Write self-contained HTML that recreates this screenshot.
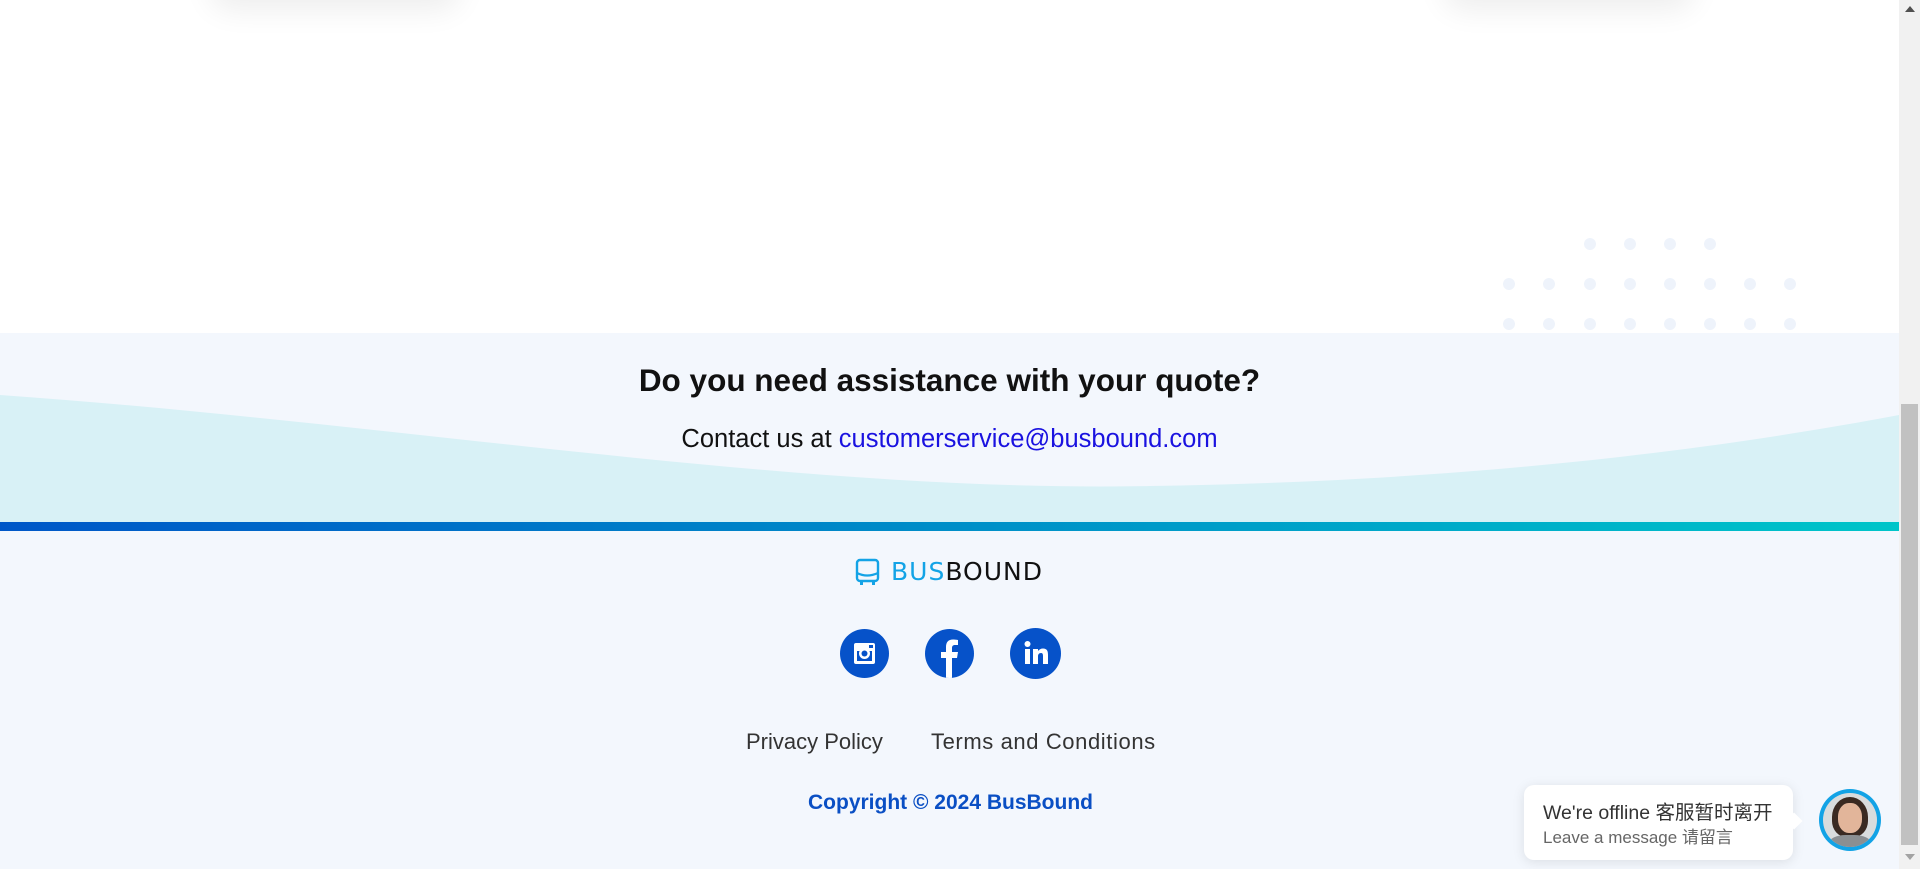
<!DOCTYPE html>
<html><head><meta charset="utf-8"><style>
html,body{margin:0;padding:0;width:1920px;height:869px;overflow:hidden;background:#fff;font-family:"Liberation Sans","Noto Sans CJK SC",sans-serif;position:relative}
.abs{position:absolute}
.card{position:absolute;top:-80px;width:250px;height:80px;border-radius:20px;background:#fff;box-shadow:0 10px 30px rgba(0,0,0,0.07)}
.dot{position:absolute;width:12px;height:12px;border-radius:50%;background:#eef3fb}
.soc{position:absolute;top:629px;width:49px;height:49px;border-radius:50%;background:#0652c9}
</style></head><body>
<div class="card" style="left:210px"></div>
<div class="card" style="left:1444px"></div>
<div id="dots"></div>
<script>
var d=document.getElementById('dots'),h='';
var rows=[[244,[1590,1630,1670,1710]],[284,[1509,1549,1590,1630,1670,1710,1750,1790]],[324,[1509,1549,1590,1630,1670,1710,1750,1790]]];
rows.forEach(function(r){r[1].forEach(function(x){h+='<div class="dot" style="left:'+(x-6)+'px;top:'+(r[0]-6)+'px"></div>'})});
d.innerHTML=h;
</script>
<div class="abs" style="left:0;top:333px;width:1899px;height:536px;background:#f3f7fd"></div>
<svg class="abs" style="left:0;top:333px" width="1899" height="190" viewBox="0 0 1899 190">
<path d="M0 62 C400 90 800 160 1150 153 C1500 148 1750 110 1899 82 L1899 190 L0 190 Z" fill="#d8f1f6"/>
</svg>
<div class="abs" style="left:0;top:522px;width:1899px;height:9px;background:linear-gradient(90deg,#0057c8,#00c5c9)"></div>
<div class="abs" style="left:0;top:362px;width:1899px;text-align:center;font-size:31.5px;font-weight:bold;color:#111">Do you need assistance with your quote?</div>
<div class="abs" style="left:0;top:425px;width:1899px;text-align:center;font-size:25.5px;color:#111">Contact us at <span style="color:#1a12e0">customerservice@busbound.com</span></div>
<svg class="abs" style="left:855px;top:558px" width="26" height="28" viewBox="0 0 26 28"><rect x="2" y="2" width="21" height="21" rx="3" fill="none" stroke="#13a3e6" stroke-width="2.4"/><path d="M2 15 Q12 20 23 15" fill="none" stroke="#13a3e6" stroke-width="2.2"/><rect x="5" y="22" width="3" height="5" fill="#13a3e6"/><rect x="17" y="22" width="3" height="5" fill="#13a3e6"/></svg>
<div class="abs" style="left:891px;top:557px;font-size:25px;letter-spacing:1px;font-family:'DejaVu Sans','Liberation Sans',sans-serif"><span style="color:#13a3e6">BUS</span><span style="color:#111">BOUND</span></div>
<div class="soc" style="left:840px"><svg width="49" height="49" viewBox="0 0 49 49"><rect x="14" y="14" width="21" height="21" rx="2" fill="#fff"/><rect x="17" y="22" width="15" height="10" fill="#0652c9"/><circle cx="24.5" cy="24.5" r="5.5" fill="#fff"/><circle cx="24.5" cy="24.5" r="3" fill="#0652c9"/><rect x="29" y="16" width="4" height="3" fill="#0652c9"/></svg></div>
<div class="soc" style="left:925px;overflow:hidden"><svg width="49" height="49" viewBox="0 0 49 49"><path d="M27 49 V29 H32 L33 23 H27 V19 C27 17 28 16 30 16 H33 V11 C31 10.5 29 10.5 28 10.5 C23.5 10.5 21 13 21 18 V23 H16 V29 H21 V49 Z" fill="#fff"/></svg></div>
<div class="soc" style="left:1010px;width:51px;height:51px;top:628px"><svg width="51" height="51" viewBox="0 0 51 51"><rect x="15" y="21" width="5" height="15" fill="#fff"/><circle cx="17.5" cy="16" r="3" fill="#fff"/><path d="M23 21 H28 V23 C29 21.5 31 20.5 33 20.5 C37 20.5 38 23 38 27 V36 H33 V28 C33 26 32.5 25 31 25 C29 25 28 26.5 28 28 V36 H23 Z" fill="#fff"/></svg></div>
<div class="abs" style="left:746px;top:729px;font-size:22px;color:#333">Privacy Policy</div>
<div class="abs" style="left:931px;top:729px;font-size:22px;letter-spacing:0.6px;color:#333">Terms and Conditions</div>
<div class="abs" style="left:808px;top:791px;font-size:21px;font-weight:bold;color:#0a4fc4">Copyright © 2024 BusBound</div>
<div class="abs" style="left:1524px;top:785px;width:269px;height:75px;background:#fff;border-radius:10px;box-shadow:0 2px 12px rgba(0,0,0,0.1)"></div>
<div class="abs" style="left:1788px;top:815px;width:12px;height:12px;background:#fff;transform:rotate(45deg)"></div>
<div class="abs" style="left:1543px;top:796px;font-size:19.5px;color:#333">We're offline 客服暂时离开</div>
<div class="abs" style="left:1543px;top:823px;font-size:17px;color:#666">Leave a message 请留言</div>
<div class="abs" style="left:1819px;top:789px;width:62px;height:62px;border-radius:50%;background:#13a3e6"></div>
<div class="abs" style="left:1823px;top:793px;width:54px;height:54px;border-radius:50%;background:#d9dcdd;overflow:hidden">
<div class="abs" style="left:9px;top:4px;width:36px;height:40px;border-radius:50% 50% 40% 40%;background:#3a2a22"></div>
<div class="abs" style="left:15px;top:10px;width:24px;height:30px;border-radius:45%;background:#e2b59a"></div>
<div class="abs" style="left:6px;top:42px;width:42px;height:20px;border-radius:40% 40% 0 0;background:#8b8f92"></div>
</div>
<div class="abs" style="left:1899px;top:0;width:21px;height:869px;background:#f1f1f1"></div>
<div class="abs" style="left:1901px;top:404px;width:17px;height:441px;background:#c1c1c1"></div>
<div class="abs" style="left:1905px;top:6px;width:0;height:0;border-left:5px solid transparent;border-right:5px solid transparent;border-bottom:6px solid #505050"></div>
<div class="abs" style="left:1905px;top:854px;width:0;height:0;border-left:5px solid transparent;border-right:5px solid transparent;border-top:6px solid #a3a3a3"></div>
</body></html>
